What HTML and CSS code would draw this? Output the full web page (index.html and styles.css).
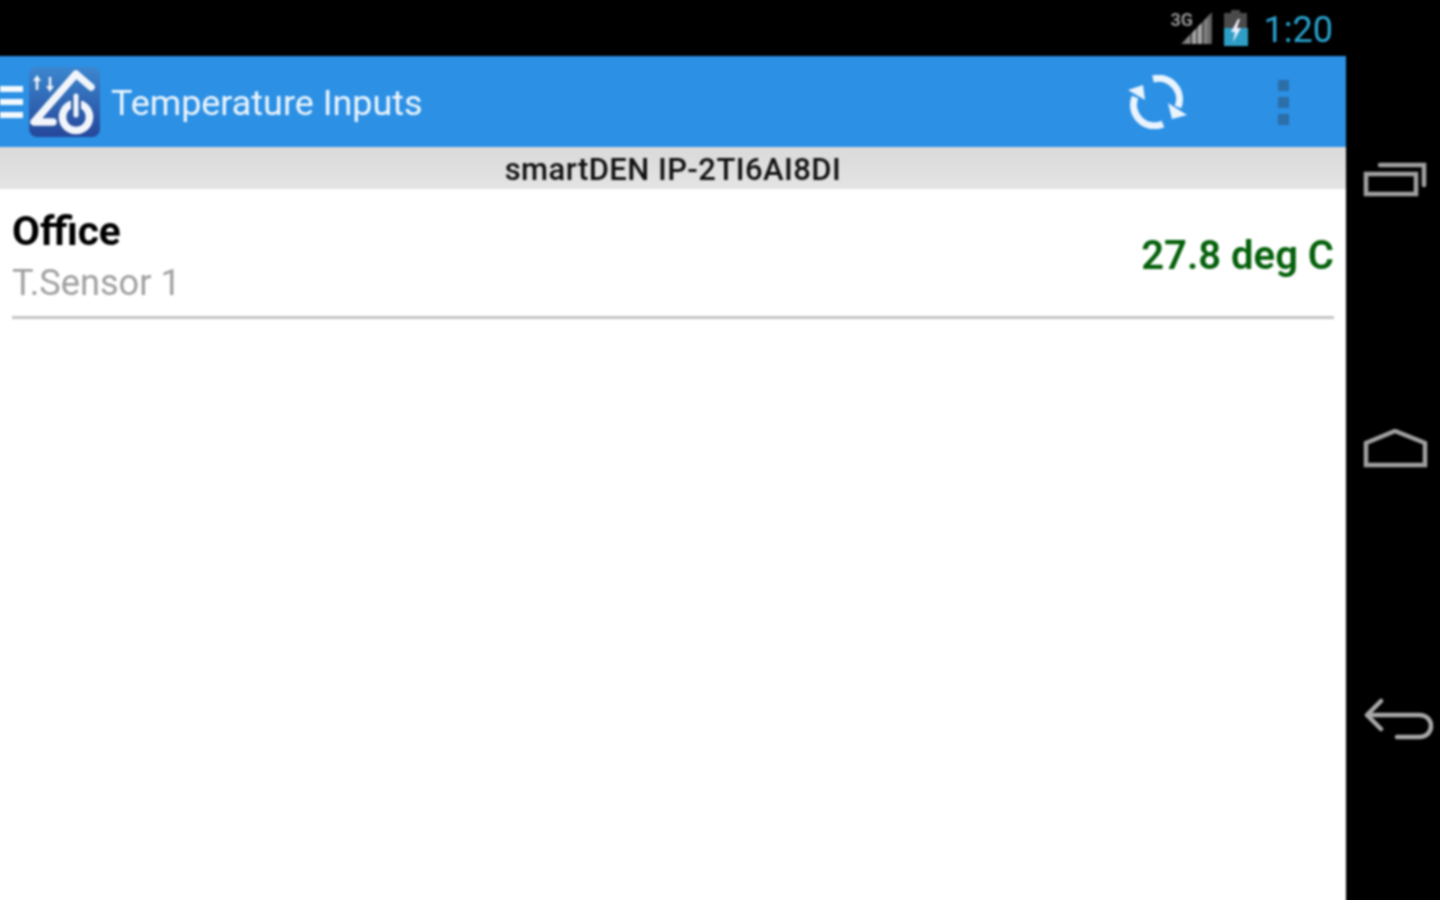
FILE: index.html
```html
<!DOCTYPE html>
<html lang="en">
<head>
<meta charset="utf-8">
<title>Temperature Inputs</title>
<link rel="stylesheet" href="styles.css">
</head>
<body>
<div class="screen">
  <main class="app">
    <header class="status">
      <span class="net">3G</span>
      <svg class="signal" width="34" height="34" viewBox="0 0 34 34"><defs><linearGradient id="sg" x1="0" x2="1" y1="0" y2="0"><stop offset="0" stop-color="#666"/><stop offset="0.55" stop-color="#b4b4b4"/><stop offset="1" stop-color="#555"/></linearGradient></defs><path d="M1 33 L32 1 V33 Z" fill="url(#sg)"/><path d="M11 33V22M17 33V15M23 33V9" stroke="#000" stroke-width="1"/></svg>
      <svg class="battery" width="26" height="36" viewBox="0 0 26 36"><path d="M8 0H17V3H24V18H1V3H8Z" fill="#4a4a4a"/><rect x="1" y="18" width="24" height="18" fill="#2f9ec6"/><path d="M15 9 L8 22 H12 L10 32 L18 18 H14 L17 9Z" fill="#eef"/></svg>
      <span class="clock">1:20</span>
    </header>
    <div class="actionbar">
      <div class="burger"><i></i><i></i><i></i></div>
      <svg class="logo" width="73" height="72" viewBox="0 0 73 72">
        <defs><linearGradient id="lg" x1="0" x2="0" y1="0" y2="1"><stop offset="0" stop-color="#3c87cf"/><stop offset="1" stop-color="#25479a"/></linearGradient></defs>
        <rect x="1" y="1" width="71" height="70" rx="8" fill="url(#lg)"/>
        <path d="M63 21 L48 8 L6 56 H25" fill="none" stroke="#f2f5fa" stroke-width="7.5" stroke-linecap="round" stroke-linejoin="round"/>
        <circle cx="48" cy="51" r="13.5" fill="none" stroke="#f2f5fa" stroke-width="7.5"/>
        <path d="M48 32V51" stroke="#2d5aa8" stroke-width="10"/>
        <path d="M48 30V49" stroke="#f2f5fa" stroke-width="5" stroke-linecap="round"/>
        <path d="M9 24V13M22 11V22" stroke="#f2f5fa" stroke-width="2.5"/>
        <path d="M5 15L9 9L13 15ZM18 20L22 26L26 20Z" fill="#f2f5fa"/>
      </svg>
      <h1 class="title">Temperature Inputs</h1>
      <svg class="refresh" width="60" height="54" viewBox="0 0 60 54">
        <path d="M7 22A21 21 0 0 0 35 49" fill="none" stroke="#eaf4fd" stroke-width="7"/>
        <path d="M0 15 L15 10 L17 25 Z" fill="#eaf4fd"/>
        <path d="M25 4A21 21 0 0 1 50 32" fill="none" stroke="#eaf4fd" stroke-width="7"/>
        <path d="M40 28 L59 40 L44 44 Z" fill="#eaf4fd"/>
      </svg>
      <div class="overflow"><i></i><i></i><i></i></div>
    </div>
    <div class="device">smartDEN IP-2TI6AI8DI</div>
    <section class="row">
      <div class="labels">
        <div class="name">Office</div>
        <div class="sensor">T.Sensor 1</div>
      </div>
      <div class="value">27.8 deg C</div>
    </section>
  </main>
  <nav class="navbar">
    <svg width="66" height="38" viewBox="0 0 66 38"><rect x="3" y="13" width="50" height="20" fill="none" stroke="#a0a0a0" stroke-width="4.5"/><path d="M17 4H61V24" fill="none" stroke="#a0a0a0" stroke-width="4.5" stroke-linecap="round"/></svg>
    <svg width="66" height="40" viewBox="0 0 66 40"><path d="M3 14 L32 2 L62 14 V36 H3 Z" fill="none" stroke="#a0a0a0" stroke-width="4.5"/></svg>
    <svg width="72" height="44" viewBox="0 0 72 44"><path d="M18 3 L4 17 L18 31" fill="none" stroke="#a8a8a8" stroke-width="4.5" stroke-linecap="round" stroke-linejoin="round"/><path d="M5 17H56C72 17 72 39 56 39H34" fill="none" stroke="#a8a8a8" stroke-width="4.5" stroke-linecap="round"/></svg>
  </nav>
</div>
</body>
</html>
```
FILE: styles.css
```css
* { box-sizing: border-box; }
html, body { margin: 0; padding: 0; height: 100%; background: #000; overflow: hidden; }
body { font-family: Roboto, "Liberation Sans", sans-serif; }
.screen { display: flex; width: 1448px; height: 908px; margin: -4px 0 0 -4px; filter: blur(0.9px); }
.app { width: 1350px; height: 908px; background: #fff; display: flex; flex-direction: column; }
.status { height: 60px; background: #000; display: flex; align-items: flex-start; justify-content: flex-end; padding: 4px 13px 0 0; position: relative; }
.net { font-size: 18px; font-weight: 700; color: #909090; margin-top: 11px; line-height: 18px; position: absolute; right: 153px; }
.signal { margin-top: 11px; margin-right: 9px; }
.battery { margin-top: 10px; margin-right: 15px; }
.clock { font-size: 36px; line-height: 36px; margin-top: 12px; color: #2aa5d2; }
.actionbar { height: 91px; background: #2c90e5; display: flex; align-items: center; padding-left: 4px; }
.burger { display: flex; flex-direction: column; gap: 7px; width: 23px; margin-right: 5px; }
.burger i { display: block; height: 6px; background: #f4f9fe; }
.logo { flex: none; margin-top: 1px; }
.title { font-size: 35.9px; font-weight: 400; color: #eef6fd; margin: 3px 0 0 10px; flex: 1; }
.refresh { margin-right: 90px; margin-top: 1px; }
.overflow { display: flex; flex-direction: column; gap: 6px; margin-right: 57px; margin-top: 1px; }
.overflow i { display: block; width: 11px; height: 11px; background: #2b6ea8; }
.device { height: 42px; padding-left: 4px; background: linear-gradient(#dadada, #e4e4e4); text-align: center; font-size: 31px; letter-spacing: 0.45px; line-height: 45px; color: #111; font-weight: 500; }
.row { margin: 0 12px 0 16px; height: 130px; border-bottom: 3px solid #c4c4c4; display: flex; align-items: center; justify-content: space-between; }
.labels { display: flex; flex-direction: column; margin-top: 9px; }
.name { font-size: 40.6px; font-weight: 700; line-height: 52px; color: #000; }
.sensor { font-size: 36.2px; line-height: 52px; color: #a0a0a0; }
.value { font-size: 40px; font-weight: 600; color: #04600a; margin-top: 6px; }
.navbar { width: 98px; height: 908px; background: #000; position: relative; }
.navbar svg { position: absolute; }
.navbar svg:nth-child(1) { top: 165px; left: 17px; }
.navbar svg:nth-child(2) { top: 433px; left: 17px; }
.navbar svg:nth-child(3) { top: 702px; left: 17px; }
```
